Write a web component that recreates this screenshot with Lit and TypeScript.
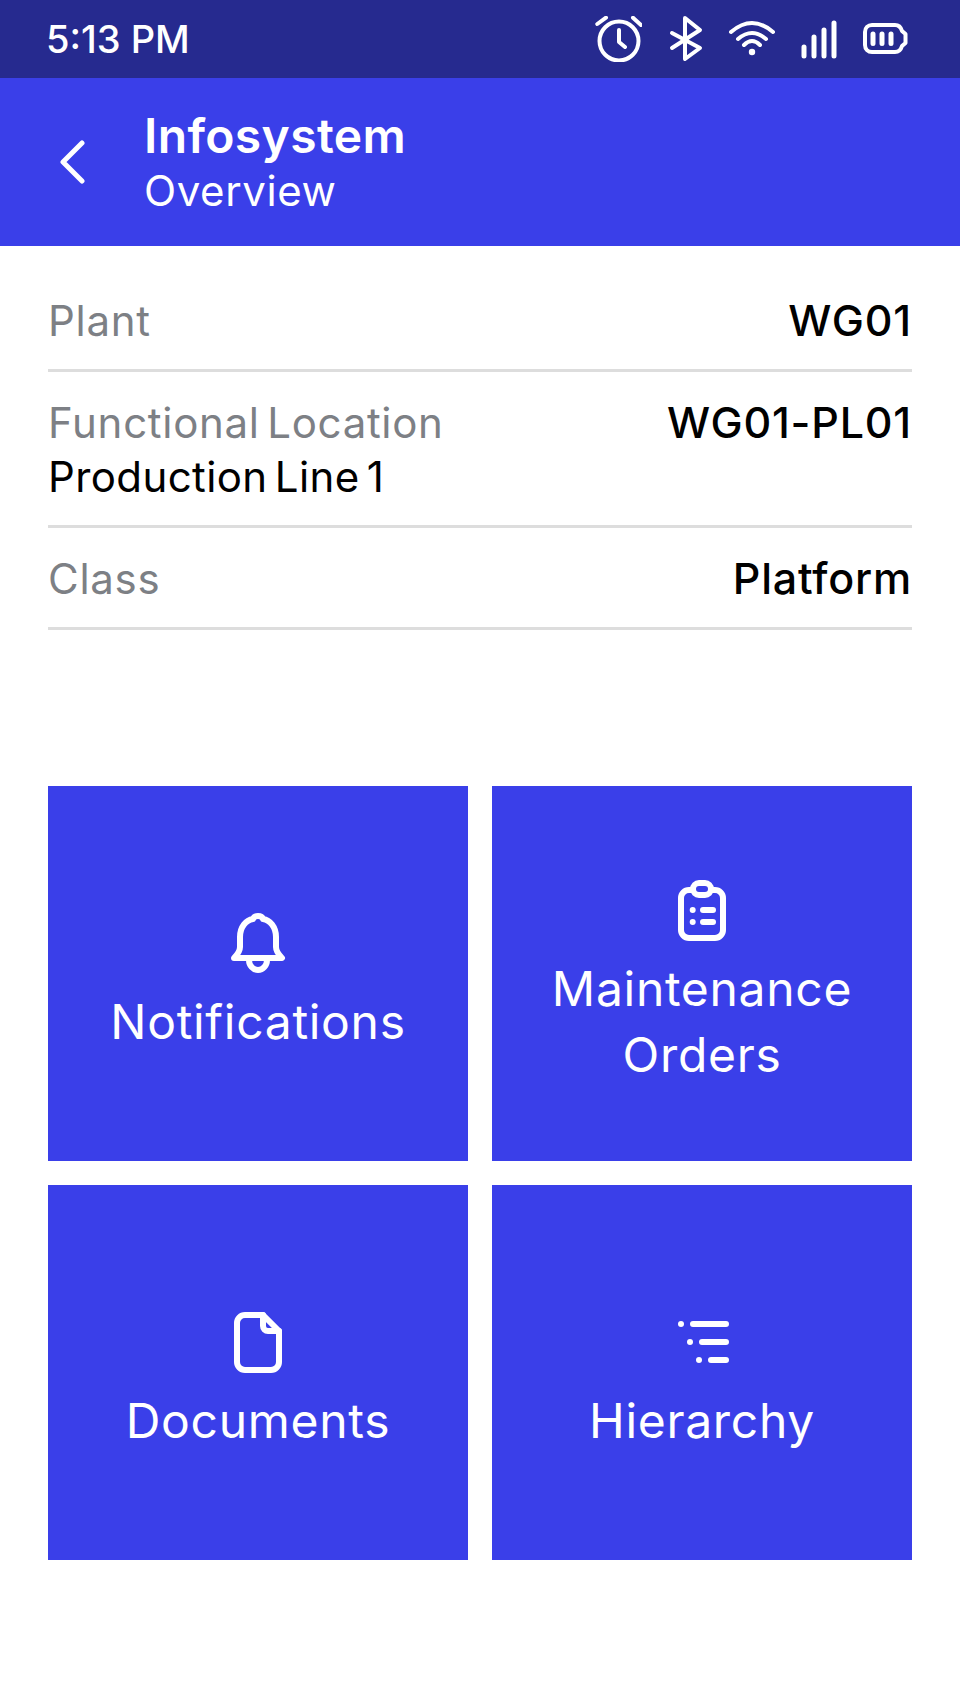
import { LitElement, html, css, svg } from "lit";
import { customElement } from "lit/decorators.js";

const icons = {
  bell: svg`<path d="M12 51C16 47 18 44 18 40V30C18 20 24 13 31 12C32 9 34 9 36 9C38 9 40 9 41 12C48 13 54 20 54 30V40C54 44 56 47 60 51Z"/><path d="M27 53A9 10 0 0 0 45 53"/>`,
  clipboard: svg`<rect x="15" y="16" width="42" height="48" rx="8"/><rect class="knock" x="27" y="9" width="18" height="12" rx="6"/><path d="M37 36H47M37 48H47"/><circle class="dot" cx="26.7" cy="36" r="3"/><circle class="dot" cx="26.7" cy="48" r="3"/>`,
  doc: svg`<path d="M23 9H41L57 25V56A8 8 0 0 1 49 64H23A8 8 0 0 1 15 56V17A8 8 0 0 1 23 9Z"/><path d="M41 9V20A5 5 0 0 0 46 25H57"/>`,
  list: svg`<path d="M27 18H60M36 36H60M45 54H60"/><circle class="dot" cx="15" cy="18" r="3"/><circle class="dot" cx="24" cy="36" r="3"/><circle class="dot" cx="33" cy="54" r="3"/>`,
};

const rows = [
  { label: "Plant", value: "WG01" },
  { label: "Functional Location", sub: "Production Line 1", value: "WG01-PL01" },
  { label: "Class", value: "Platform" },
];

const tiles = [
  { icon: icons.bell, lines: ["Notifications"] },
  { icon: icons.clipboard, lines: ["Maintenance", "Orders"] },
  { icon: icons.doc, lines: ["Documents"] },
  { icon: icons.list, lines: ["Hierarchy"] },
];

@customElement("app-root")
export class AppRoot extends LitElement {
  static styles = css`
    :host {
      display: block;
      width: 960px;
      height: 1704px;
      background: #fff;
      font-family: "Inter", "Noto Sans", sans-serif;
    }

    .status {
      height: 78px;
      box-sizing: border-box;
      padding: 0 50px 0 46px;
      display: flex;
      align-items: center;
      justify-content: space-between;
      background: #262a8f;
      color: #fff;
    }
    .time {
      font-size: 38px;
      font-weight: 500;
      letter-spacing: 0;
    }
    .status-icons {
      display: flex;
      gap: 24px;
      height: 46px;
    }
    .status-icons svg {
      height: 46px;
      fill: none;
      stroke: #fff;
      stroke-width: 4;
      stroke-linecap: round;
      stroke-linejoin: round;
    }
    .status-icons .fill {
      fill: #fff;
      stroke: none;
    }
    .status-icons .bar {
      stroke-width: 5;
    }

    .header {
      height: 168px;
      box-sizing: border-box;
      padding-left: 60px;
      display: flex;
      align-items: center;
      gap: 59px;
      background: #3a3fe9;
      color: #fff;
    }
    .back {
      width: 25px;
      height: 44px;
      fill: none;
      stroke: #fff;
      stroke-width: 5;
      stroke-linecap: round;
      stroke-linejoin: round;
    }
    .titles {
      display: flex;
      flex-direction: column;
      margin-top: 2px;
    }
    .title {
      font-size: 48px;
      line-height: 56px;
      font-weight: 600;
      letter-spacing: 0.36px;
    }
    .subtitle {
      font-size: 42px;
      line-height: 54px;
      font-weight: 400;
      letter-spacing: 0.6px;
    }

    .rows {
      padding: 24px 48px 0;
    }
    .row {
      display: flex;
      justify-content: space-between;
      padding: 24px 0 21px;
      border-bottom: 3px solid #dddddd;
      font-size: 42px;
      line-height: 54px;
      letter-spacing: 0.4px;
      word-spacing: -5px;
    }
    .label {
      color: #7d8085;
      letter-spacing: 0.7px;
    }
    .sub {
      color: #000;
      letter-spacing: 0.4px;
    }
    .value {
      color: #000;
      font-size: 43px;
      font-weight: 500;
      letter-spacing: 0.8px;
      margin-top: -1px;
    }

    .tiles {
      margin: 156px 48px 0;
      display: grid;
      grid-template-columns: 1fr 1fr;
      grid-auto-rows: 375px;
      gap: 24px;
    }
    .tile {
      box-sizing: border-box;
      padding-top: 15px;
      display: flex;
      flex-direction: column;
      align-items: center;
      justify-content: center;
      gap: 10px;
      background: #3a3fe9;
      color: #fff;
      font-size: 48px;
      line-height: 66px;
      letter-spacing: 0.7px;
      text-align: center;
    }
    .tile svg {
      width: 72px;
      height: 72px;
      fill: none;
      stroke: #fff;
      stroke-width: 6;
      stroke-linecap: round;
      stroke-linejoin: round;
    }
    .tile svg .dot {
      fill: #fff;
      stroke: none;
    }
    .tile svg .knock {
      fill: #3a3fe9;
    }
  `;

  render() {
    return html`
      <div class="status">
        <span class="time">5:13 PM</span>
        <div class="status-icons">
          <svg width="48" viewBox="0 0 48 46">
            <circle cx="25" cy="25" r="19.5" />
            <path d="M3.3 8L12 1.7M39 1.7L47 9M25 14V26L31 31" />
          </svg>
          <svg width="38" viewBox="0 0 38 46">
            <path d="M6 17L34 32L19 43V2L34 14L6 32" />
          </svg>
          <svg width="48" viewBox="0 0 48 46">
            <path d="M3 16Q24 -2 45 16M10 23Q24 11 38 23M16 29Q24 21 32 29" />
            <circle class="fill" cx="24" cy="36" r="3.2" />
          </svg>
          <svg width="38" viewBox="0 0 38 46">
            <path class="bar" d="M4 31V40M14 21V40M24 14V40M34 7V40" />
          </svg>
          <svg width="48" viewBox="0 0 48 46">
            <path d="M10 9H33C37 9 39 11.5 40 15L43.5 18V27L40 30C39 33.5 37 36 33 36H10C6 36 3 33 3 29V16C3 12 6 9 10 9Z" />
            <path class="bar" d="M11 18V27.5M20 18V27.5M29 18V27.5" />
          </svg>
        </div>
      </div>

      <div class="header">
        <svg class="back" viewBox="0 0 25 44">
          <path d="M22 3L3 22L22 41" />
        </svg>
        <div class="titles">
          <span class="title">Infosystem</span>
          <span class="subtitle">Overview</span>
        </div>
      </div>

      <div class="rows">
        ${rows.map(
          (r) => html`
            <div class="row">
              <div>
                <div class="label">${r.label}</div>
                ${r.sub ? html`<div class="sub">${r.sub}</div>` : ""}
              </div>
              <div class="value">${r.value}</div>
            </div>
          `,
        )}
      </div>

      <div class="tiles">
        ${tiles.map(
          (t) => html`
            <div class="tile">
              <svg viewBox="0 0 72 72">${t.icon}</svg>
              <div>${t.lines.map((l) => html`<div>${l}</div>`)}</div>
            </div>
          `,
        )}
      </div>
    `;
  }
}
